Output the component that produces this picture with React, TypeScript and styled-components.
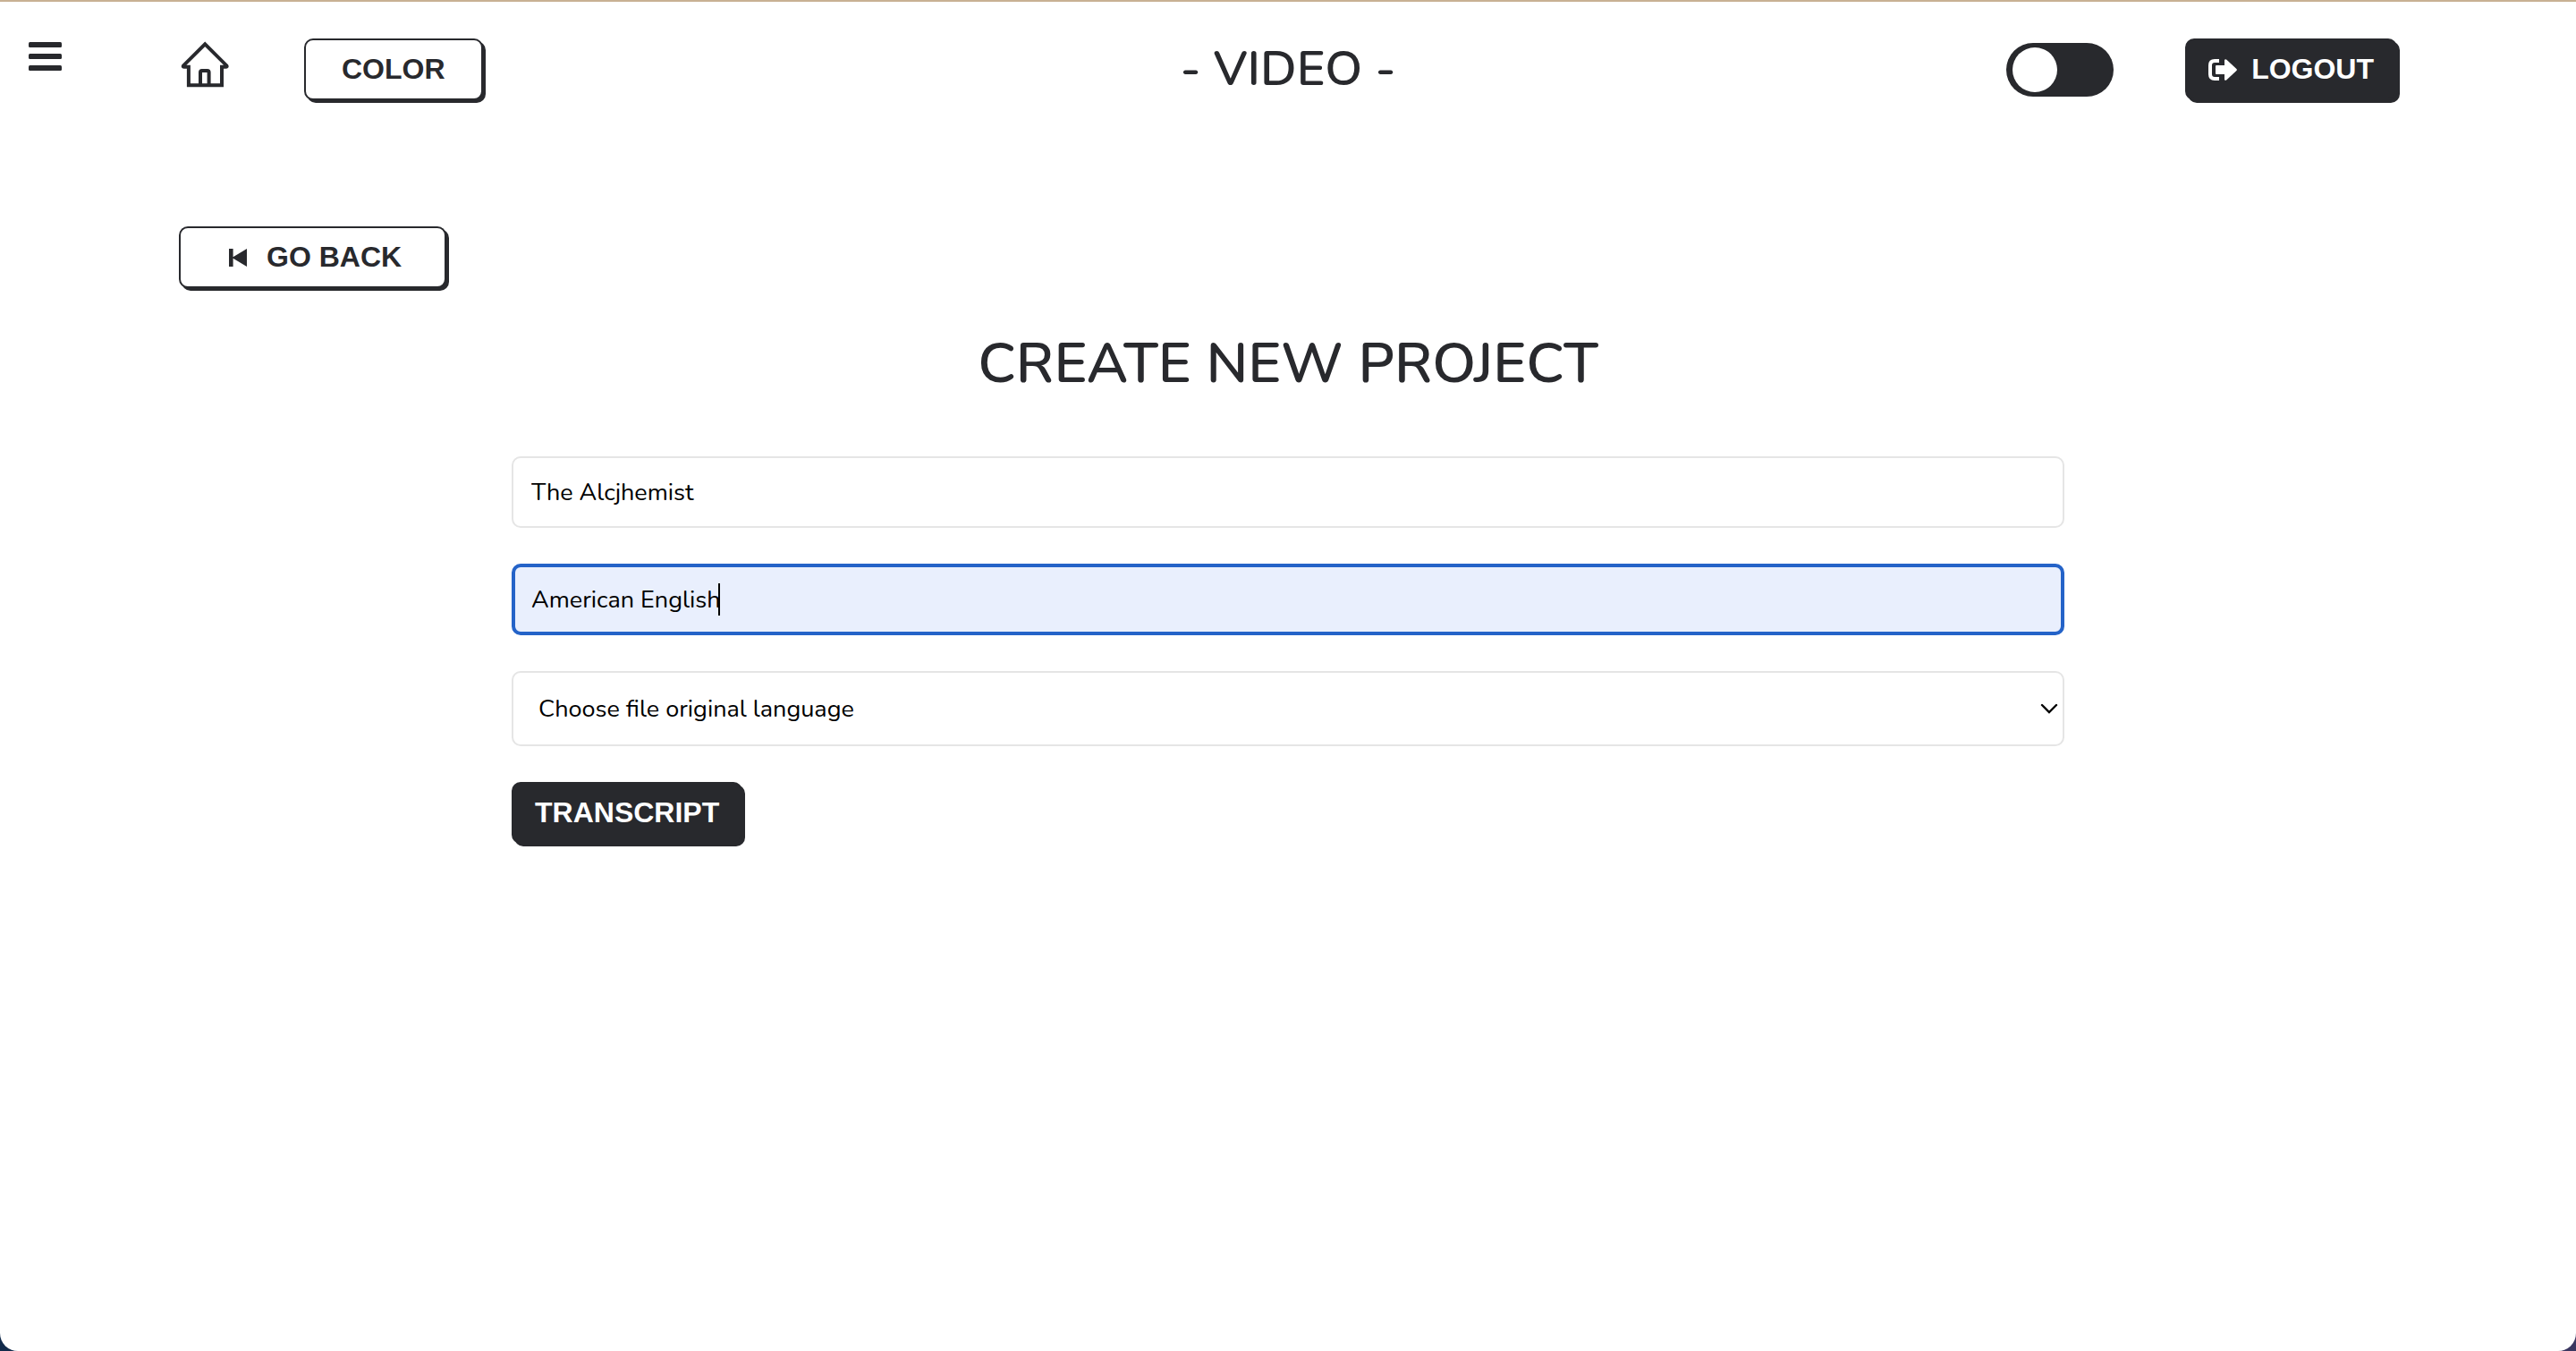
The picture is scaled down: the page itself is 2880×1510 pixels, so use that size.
import React, { useState } from "react";
import styled, { createGlobalStyle } from "styled-components";

const ink = "#28292d";
const font = `Nunito, "Noto Sans", sans-serif`;

const GlobalStyle = createGlobalStyle`
  * { box-sizing: border-box; }
  body {
    margin: 0;
    background: linear-gradient(90deg, #122b4b, #3a3660);
    color: ${ink};
    font-family: ${font};
  }
`;

const Page = styled.div`
  min-height: 100vh;
  background: #fff;
  border-top: 2px solid #c8b194;
  border-radius: 0 0 20px 20px;
`;

const Header = styled.header`
  display: grid;
  grid-template-columns: 1fr auto 1fr;
  align-items: start;
  padding: 41px 32px 0;
`;

const HeaderLeft = styled.div`
  display: flex;
  align-items: flex-start;
`;

const HeaderRight = styled.div`
  display: flex;
  align-items: center;
  justify-content: flex-end;
  gap: 80px;
  padding-right: 168px;
`;

const MenuButton = styled.button`
  display: flex;
  margin: 4px 133px 0 0;
  padding: 0;
  border: 0;
  background: none;
  color: ${ink};
  cursor: pointer;
`;

const HomeLink = styled.a`
  display: flex;
  margin: 3px 84px 0 0;
  color: ${ink};
`;

const Button = styled.button<{ $solid?: boolean; $inset: number }>`
  display: inline-flex;
  align-items: center;
  gap: 16px;
  padding: 14px ${(p) => p.$inset}px;
  border: 2px solid ${ink};
  border-radius: 10px;
  background: ${(p) => (p.$solid ? ink : "#fff")};
  box-shadow: 3px 3px 0 ${ink};
  color: ${(p) => (p.$solid ? "#fff" : ink)};
  font: bold 32px/37px "Liberation Sans", Arial, sans-serif;
  white-space: nowrap;
  cursor: pointer;
`;

const PageName = styled.h2`
  margin: 0;
  font: 600 54px/69px ${font};
`;

const Switch = styled.input`
  appearance: none;
  display: flex;
  align-items: center;
  width: 120px;
  height: 60px;
  margin: 0;
  padding: 0 7px;
  border-radius: 30px;
  background: ${ink};
  cursor: pointer;

  &::before {
    content: "";
    width: 50px;
    height: 50px;
    border-radius: 50%;
    background: #fff;
  }
  &:checked { justify-content: flex-end; }
`;

const Main = styled.main`
  padding: 141px 200px 0;
`;

const Title = styled.h1`
  margin: 44px 0 64px;
  text-align: center;
  font: 600 63px/80px ${font};
`;

const Form = styled.form`
  display: flex;
  flex-direction: column;
  align-items: flex-start;
  gap: 40px;
  width: 70%;
  margin: 0 auto;
`;

const Field = styled.div`
  position: relative;
  width: 100%;
`;

const TextInput = styled.input<{ $active?: boolean }>`
  display: block;
  width: 100%;
  height: 80px;
  padding: 0 ${(p) => (p.$active ? 18 : 20)}px;
  border: ${(p) => (p.$active ? "4px solid #2463c8" : "2px solid #e5e5e5")};
  border-radius: 10px;
  outline: none;
  background: ${(p) => (p.$active ? "#e9effd" : "#fff")};
  color: #000;
  font: 400 27px/36px ${font};
  caret-color: transparent;
`;

const Caret = styled.span`
  position: absolute;
  top: 22px;
  left: 231px;
  width: 2px;
  height: 36px;
  background: #000;
`;

const Select = styled.select`
  appearance: none;
  display: block;
  width: 100%;
  height: 84px;
  padding: 2px 28px 0;
  border: 2px solid #e5e5e5;
  border-radius: 10px;
  background: #fff;
  color: #000;
  font: 400 27px/36px ${font};
`;

const Chevron = styled.svg`
  position: absolute;
  top: 36px;
  right: 7px;
  pointer-events: none;
`;

const MenuIcon = () => (
  <svg width="37" height="32" fill="currentColor" aria-hidden="true">
    <rect width="37" height="6" rx="1.5" />
    <rect y="13" width="37" height="6" rx="1.5" />
    <rect y="26" width="37" height="6" rx="1.5" />
  </svg>
);

const HomeIcon = () => (
  <svg width="54" height="52" fill="none" stroke="currentColor" strokeWidth="4" aria-hidden="true">
    <path d="M8.9 49.3V28.8H4.2Q2 28.8 3.2 27.2L27.2 3.4L51.2 27.2Q52.4 28.8 50.2 28.8H46V49.3Z" />
    <path d="M22 49V34.8Q22 33 23.8 33H29.8Q31.6 33 31.6 34.8V49" />
  </svg>
);

const LogoutIcon = () => (
  <svg width="32" height="24" fill="none" aria-hidden="true">
    <path d="M12 2H7Q2 2 2 7V17Q2 22 7 22H12" stroke="currentColor" strokeWidth="4" />
    <path
      d="M8 8Q8 7 9 7H18V1Q19 -0.6 20.4 0.8L31.4 11Q32.4 12 31.4 13L20.4 23.2Q19 24.6 18 23V17H9Q8 17 8 16Z"
      fill="currentColor"
    />
  </svg>
);

const BackIcon = () => (
  <svg width="32" height="20" fill="currentColor" aria-hidden="true">
    <path d="M6 0H10.6V9.2L26 0V20L10.6 10.8V20H6Z" />
  </svg>
);

export default function App() {
  const [name, setName] = useState("The Alcjhemist");
  const [language, setLanguage] = useState("American English");

  return (
    <>
      <GlobalStyle />
      <Page>
        <Header>
          <HeaderLeft>
            <MenuButton type="button" aria-label="Menu">
              <MenuIcon />
            </MenuButton>
            <HomeLink href="#" aria-label="Home">
              <HomeIcon />
            </HomeLink>
            <Button type="button" $inset={40}>COLOR</Button>
          </HeaderLeft>
          <PageName>- VIDEO -</PageName>
          <HeaderRight>
            <Switch type="checkbox" role="switch" aria-label="Dark mode" />
            <Button type="button" $solid $inset={24}>
              <LogoutIcon />
              LOGOUT
            </Button>
          </HeaderRight>
        </Header>
        <Main>
          <Button type="button" $inset={48}>
            <BackIcon />
            GO BACK
          </Button>
          <Title>CREATE NEW PROJECT</Title>
          <Form onSubmit={(e) => e.preventDefault()}>
            <Field>
              <TextInput
                aria-label="Project name"
                value={name}
                onChange={(e) => setName(e.target.value)}
              />
            </Field>
            <Field>
              <TextInput
                $active
                aria-label="Language"
                value={language}
                onChange={(e) => setLanguage(e.target.value)}
              />
              <Caret />
            </Field>
            <Field>
              <Select aria-label="File original language">
                <option>Choose file original language</option>
              </Select>
              <Chevron width="20" height="12" fill="none" stroke="#000" strokeWidth="2.4" aria-hidden="true">
                <path d="M2 2L10 10L18 2" strokeLinecap="round" />
              </Chevron>
            </Field>
            <Button type="submit" $solid $inset={24}>TRANSCRIPT</Button>
          </Form>
        </Main>
      </Page>
    </>
  );
}
